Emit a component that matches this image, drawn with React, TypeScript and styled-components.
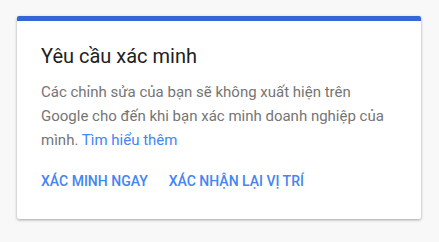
import React from 'react';
import styled, { createGlobalStyle } from 'styled-components';

const GlobalStyle = createGlobalStyle`
  html, body {
    margin: 0;
    padding: 0;
    background: #f8f8f8;
  }
  body {
    font-family: Roboto, "Noto Sans", Arial, sans-serif;
  }
`;

const Page = styled.div`
  padding: 16px 17px;
`;

const Card = styled.section`
  width: 404px;
  box-sizing: border-box;
  background: #ffffff;
  border-top: 5px solid #3367d6;
  border-radius: 2px;
  box-shadow: 0 1px 3px rgba(0, 0, 0, 0.35);
  padding: 21px 24px 20px;
`;

const Title = styled.h2`
  margin: 0;
  font-size: 20px;
  line-height: 28px;
  font-weight: 400;
  color: #212121;
`;

const Body = styled.p`
  margin: 10px 0 0;
  font-size: 15px;
  line-height: 24px;
  color: #757575;
`;

const Link = styled.a`
  color: #4285f4;
  text-decoration: none;
`;

const Actions = styled.div`
  display: flex;
  gap: 21px;
  margin-top: 11px;
`;

const ActionButton = styled.button`
  border: none;
  background: none;
  padding: 0;
  font-family: inherit;
  font-size: 14px;
  line-height: 36px;
  font-weight: 500;
  color: #4285f4;
  text-transform: uppercase;
  cursor: pointer;
`;

export default function App() {
  return (
    <>
      <GlobalStyle />
      <Page>
        <Card>
          <Title>Yêu cầu xác minh</Title>
          <Body>
            Các chỉnh sửa của bạn sẽ không xuất hiện trên Google cho đến khi bạn xác minh doanh nghiệp của
            mình. <Link href="#">Tìm hiểu thêm</Link>
          </Body>
          <Actions>
            <ActionButton>Xác minh ngay</ActionButton>
            <ActionButton>Xác nhận lại vị trí</ActionButton>
          </Actions>
        </Card>
      </Page>
    </>
  );
}
